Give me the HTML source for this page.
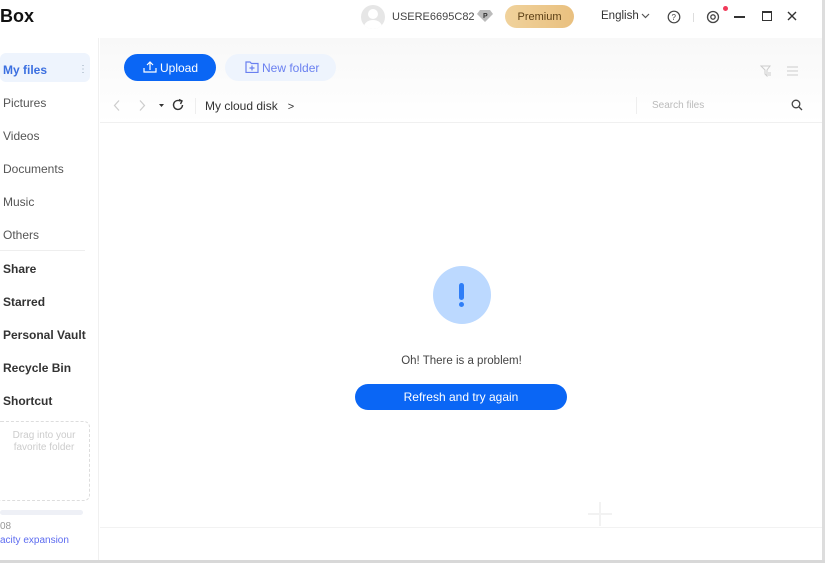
<!DOCTYPE html>
<html><head><meta charset="utf-8"><style>
*{margin:0;padding:0;box-sizing:border-box}
body{width:825px;height:563px;overflow:hidden;background:#fff;font-family:"Liberation Sans",sans-serif;position:relative;color:#333}
.abs{position:absolute}
.side a{position:absolute;left:3px;font-size:12px;color:#555}
.side b{position:absolute;left:3px;font-size:12px;color:#333}
</style></head><body>
<div class="abs" style="left:0;top:0;width:825px;height:38px;background:#fff"></div>
<div class="abs" style="left:0;top:6px;font-size:18px;font-weight:bold;color:#111">Box</div>
<div class="abs" style="left:361px;top:5px;width:24px;height:24px;border-radius:50%;background:#e6e6e6;overflow:hidden"><div style="position:absolute;left:7px;top:4px;width:10px;height:10px;border-radius:50%;background:#fff"></div><div style="position:absolute;left:3px;top:15px;width:18px;height:14px;border-radius:50%;background:#fff"></div></div>
<div class="abs" style="left:392px;top:11px;font-size:11px;color:#444">USERE6695C82</div>
<svg class="abs" style="left:477px;top:9px" width="16" height="14"><path d="M3 1h10l3 4-8 8-8-8z" fill="#bbb"/><text x="6" y="9" font-size="7" font-weight="bold" fill="#333" font-family="Liberation Sans">P</text></svg>
<div class="abs" style="left:505px;top:5px;width:69px;height:23px;border-radius:12px;background:linear-gradient(90deg,#f0d29c,#e9c07f);font-size:11px;color:#5a3e14;text-align:center;line-height:24px">Premium</div>
<div class="abs" style="left:601px;top:10px;font-size:11.5px;color:#333">English</div>
<svg class="abs" style="left:641px;top:12px" width="9" height="8"><path d="M1 2l3.5 3.5L8 2" stroke="#555" fill="none" stroke-width="1.2"/></svg>
<svg class="abs" style="left:667px;top:10px" width="14" height="14"><circle cx="7" cy="7" r="5.8" stroke="#444" fill="none" stroke-width="1.2"/><text x="4.5" y="10" font-size="8" fill="#444" font-family="Liberation Sans">?</text></svg>
<div class="abs" style="left:693px;top:13px;width:1px;height:9px;background:#ddd"></div>
<svg class="abs" style="left:706px;top:10px" width="14" height="14"><circle cx="7" cy="7" r="5.5" stroke="#444" fill="none" stroke-width="1.3"/><circle cx="7" cy="7" r="2.2" stroke="#444" fill="none" stroke-width="1.3"/></svg>
<div class="abs" style="left:723px;top:6px;width:5px;height:5px;border-radius:50%;background:#f03a5a"></div>
<div class="abs" style="left:734px;top:16px;width:11px;height:1.5px;background:#333"></div>
<div class="abs" style="left:762px;top:11px;width:10px;height:10px;border:1.5px solid #333;border-top-width:2px"></div>
<svg class="abs" style="left:787px;top:11px" width="10" height="10"><path d="M1 1l8 8M9 1l-8 8" stroke="#333" stroke-width="1.4"/></svg>
<div class="abs side" style="left:0;top:38px;width:99px;height:522px;border-right:1px solid #f0f0f0;background:#fff">
<div class="abs" style="left:0;top:15px;width:90px;height:29px;background:#eef4fd;border-radius:6px"></div>
<b style="top:25px;color:#3b6fe0">My files</b>
<div class="abs" style="left:78px;top:26px;color:#9ab;font-size:10px">⋮</div>
<a style="top:58px">Pictures</a>
<a style="top:91px">Videos</a>
<a style="top:124px">Documents</a>
<a style="top:157px">Music</a>
<a style="top:190px">Others</a>
<div class="abs" style="left:0;top:212px;width:85px;height:1px;background:#eee"></div>
<b style="top:224px">Share</b>
<b style="top:257px">Starred</b>
<b style="top:290px">Personal Vault</b>
<b style="top:323px">Recycle Bin</b>
<b style="top:356px">Shortcut</b>
<div class="abs" style="left:-5px;top:383px;width:95px;height:80px;border:1px dashed #ddd;border-radius:6px"></div>
<div class="abs" style="left:8px;top:392px;width:72px;text-align:center;font-size:10px;color:#ccc;line-height:12px">Drag into your favorite folder</div>
<div class="abs" style="left:0;top:472px;width:83px;height:5px;border-radius:3px;background:#eef0f6"></div>
<div class="abs" style="left:0;top:483px;font-size:10px;color:#999">08</div>
<div class="abs" style="left:0;top:497px;font-size:10px;color:#5d6cf0">acity expansion</div>
</div>
<div class="abs" style="left:100px;top:38px;width:722px;height:85px;background:linear-gradient(#f8f8f8,#fff)"></div>
<div class="abs" style="left:124px;top:54px;width:92px;height:27px;border-radius:14px;background:#0a66f5"></div>
<div class="abs" style="left:160px;top:61px;font-size:12px;color:#fff">Upload</div>
<svg class="abs" style="left:143px;top:60px" width="14" height="13"><path d="M7 10V2M4 5l3-3 3 3M1 8v4h12V8" stroke="#fff" fill="none" stroke-width="1.2"/></svg>
<div class="abs" style="left:225px;top:54px;width:111px;height:27px;border-radius:14px;background:#eef4fd"></div>
<div class="abs" style="left:262px;top:61px;font-size:12px;color:#6a80f0">New folder</div>
<svg class="abs" style="left:245px;top:61px" width="14" height="12"><path d="M1 1h4l1.5 1.5H13v9H1z" stroke="#6a80f0" fill="none" stroke-width="1.2"/><path d="M7 4.5v5M4.5 7h5" stroke="#6a80f0" stroke-width="1.2"/></svg>
<svg class="abs" style="left:760px;top:65px" width="12" height="12"><path d="M1 1h9L7 5v6L5 9V5z" stroke="#ccc" fill="none"/><path d="M8 8h3M8 10h3" stroke="#ccc"/></svg>
<svg class="abs" style="left:787px;top:66px" width="11" height="10"><path d="M0 1h11M0 5h11M0 9h11" stroke="#ccc"/></svg>
<svg class="abs" style="left:112px;top:99px" width="60" height="13"><path d="M7 1.5L2.5 6.5 7 11.5" stroke="#ccc" fill="none" stroke-width="1.2"/><path d="M28 1.5l4.5 5-4.5 5" stroke="#ccc" fill="none" stroke-width="1.2"/><path d="M47 5h5l-2.5 3z" fill="#333"/></svg>
<svg class="abs" style="left:171px;top:98px" width="14" height="14"><path d="M11.5 7A4.5 4.5 0 1 1 9.5 3.2" stroke="#333" fill="none" stroke-width="1.4"/><path d="M8 1.5l3 1.5-1.5 3" stroke="#333" fill="none" stroke-width="1.4"/></svg>
<div class="abs" style="left:195px;top:98px;width:1px;height:16px;background:#eee"></div>
<div class="abs" style="left:205px;top:99px;font-size:12px;color:#333">My cloud disk &nbsp;&nbsp;<span style="font-size:11px">&gt;</span></div>
<div class="abs" style="left:636px;top:97px;width:1px;height:17px;background:#eee"></div>
<div class="abs" style="left:652px;top:100px;font-size:10px;color:#bbb">Search files</div>
<svg class="abs" style="left:791px;top:99px" width="12" height="12"><circle cx="5" cy="5" r="3.8" stroke="#444" fill="none" stroke-width="1.3"/><path d="M8 8l3 3" stroke="#444" stroke-width="1.3"/></svg>
<div class="abs" style="left:100px;top:122px;width:722px;height:1px;background:#f0f0f0"></div>
<div class="abs" style="left:433px;top:266px;width:58px;height:58px;border-radius:50%;background:#bcd9ff"></div>
<div class="abs" style="left:459px;top:283px;width:5px;height:17px;border-radius:3px;background:#2f7ef7"></div>
<div class="abs" style="left:459px;top:302px;width:5px;height:5px;border-radius:50%;background:#2f7ef7"></div>
<div class="abs" style="left:330px;top:355px;width:263px;text-align:center;font-size:11.5px;color:#444">Oh! There is a problem!</div>
<div class="abs" style="left:355px;top:384px;width:212px;height:26px;border-radius:13px;background:#0a66f5;color:#fff;font-size:12px;line-height:26px;text-align:center">Refresh and try again</div>
<div class="abs" style="left:588px;top:513px;width:24px;height:2px;background:#f2f2f2"></div>
<div class="abs" style="left:599px;top:502px;width:2px;height:24px;background:#f2f2f2"></div>
<div class="abs" style="left:100px;top:527px;width:722px;height:1px;background:#f2f2f2"></div>
<div class="abs" style="left:822px;top:0;width:3px;height:563px;background:#ddd"></div>
<div class="abs" style="left:0;top:560px;width:825px;height:3px;background:#d8d8d8"></div>
</body></html>
